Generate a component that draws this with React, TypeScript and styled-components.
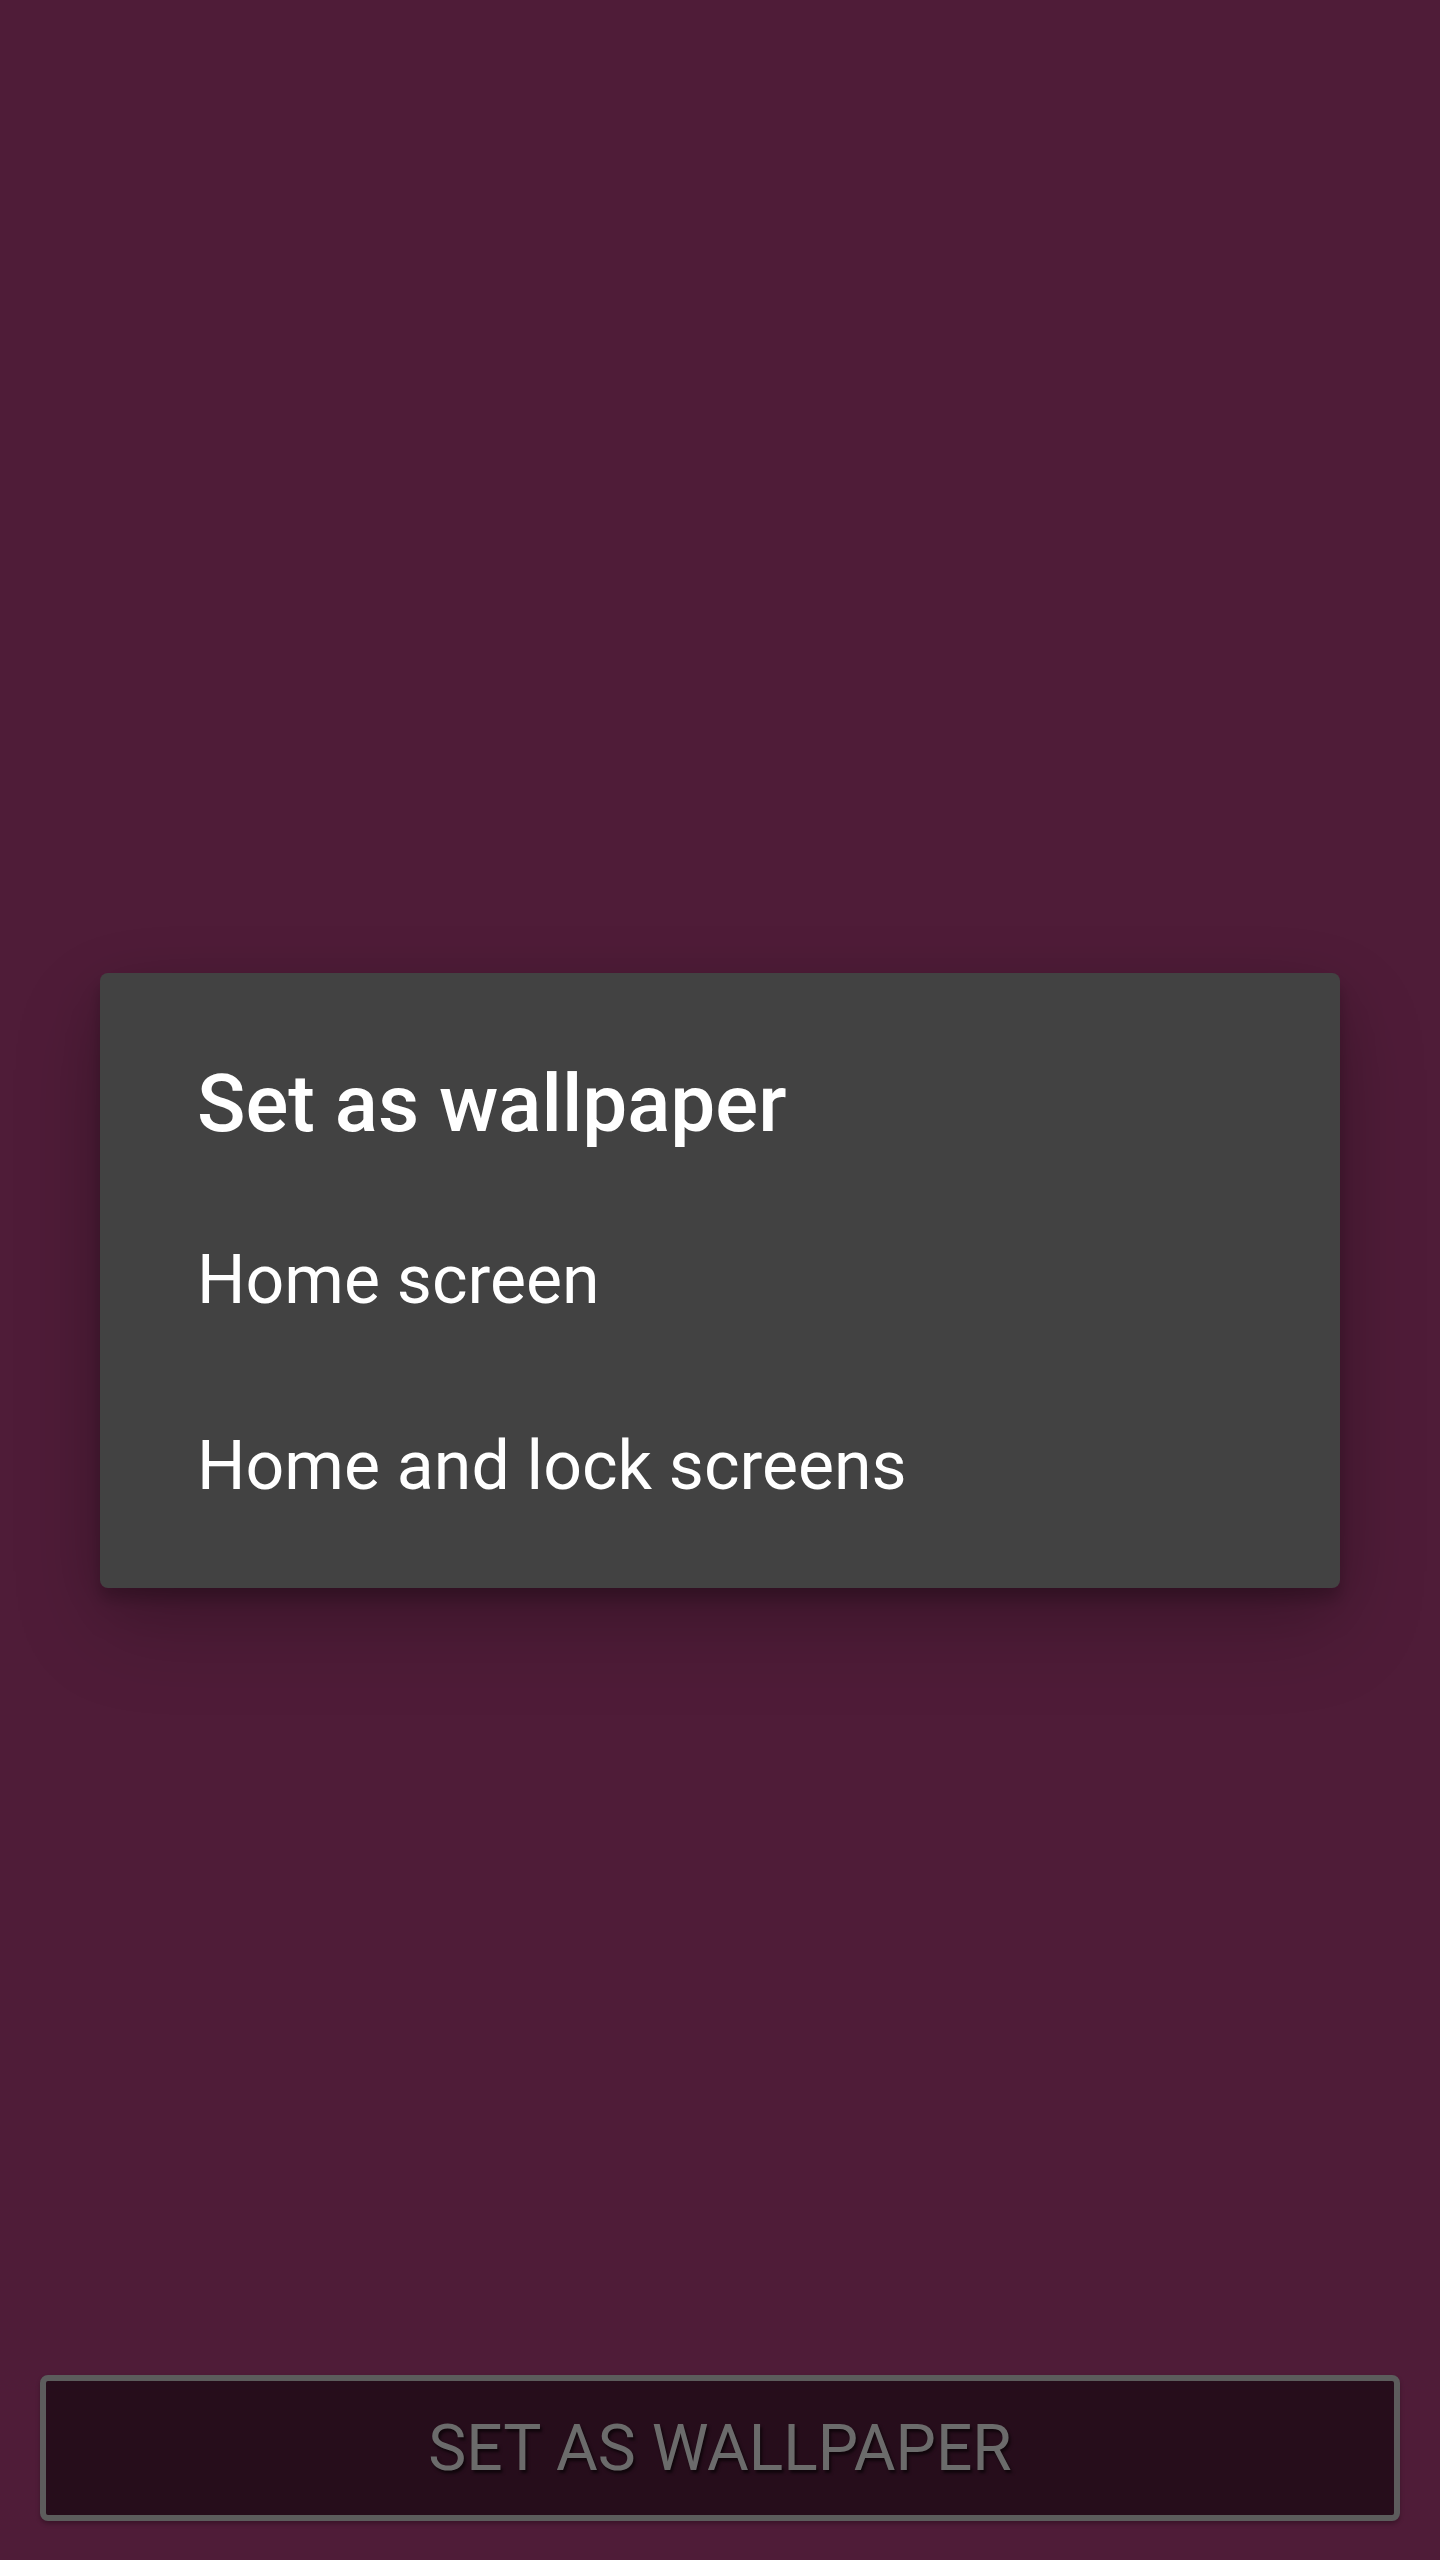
import React from "react";
import styled, { createGlobalStyle } from "styled-components";

const GlobalStyle = createGlobalStyle`
  html, body {
    margin: 0;
    padding: 0;
    background: #4f1c38;
  }
  body {
    font-family: Roboto, "Noto Sans", "Liberation Sans", sans-serif;
  }
  * {
    box-sizing: border-box;
  }
`;

const Page = styled.div`
  display: flex;
  flex-direction: column;
  min-height: 100vh;
  background: #4f1c38;
`;

const Footer = styled.div`
  margin-top: auto;
  padding: 0 40px 39px;
`;

const WallpaperButton = styled.button`
  display: block;
  width: 100%;
  height: 146px;
  background: #260d1b;
  border: 6px solid #5c5c5c;
  border-radius: 8px;
  font-family: Roboto, sans-serif;
  font-size: 64px;
  font-weight: 400;
  color: #6b6b6b;
  text-shadow: 2px 3px 3px rgba(0, 0, 0, 0.6);
  box-shadow: 0 3px 4px rgba(0, 0, 0, 0.25);
  cursor: pointer;
  padding: 0;
`;

const Scrim = styled.div`
  position: fixed;
  inset: 0;
  display: flex;
  align-items: center;
  justify-content: center;
`;

const Dialog = styled.div`
  width: 1240px;
  background: #424242;
  border-radius: 8px;
  padding: 83px 98px 29px 97px;
  box-shadow: 0 40px 90px rgba(0, 0, 0, 0.18), 0 14px 60px rgba(0, 0, 0, 0.14),
    0 11px 15px rgba(0, 0, 0, 0.2);
`;

const Title = styled.h2`
  margin: 0 0 35px;
  font-family: Roboto, sans-serif;
  font-size: 80px;
  font-weight: 500;
  line-height: 96px;
  color: #ffffff;
`;

const Option = styled.div`
  font-family: Roboto, sans-serif;
  font-size: 68px;
  font-weight: 400;
  line-height: 186px;
  color: #ffffff;
  cursor: pointer;
`;

const options = ["Home screen", "Home and lock screens"];

export default function App() {
  return (
    <Page>
      <GlobalStyle />
      <Footer>
        <WallpaperButton>SET AS WALLPAPER</WallpaperButton>
      </Footer>
      <Scrim>
        <Dialog>
          <Title>Set as wallpaper</Title>
          {options.map((o) => (
            <Option key={o}>{o}</Option>
          ))}
        </Dialog>
      </Scrim>
    </Page>
  );
}
